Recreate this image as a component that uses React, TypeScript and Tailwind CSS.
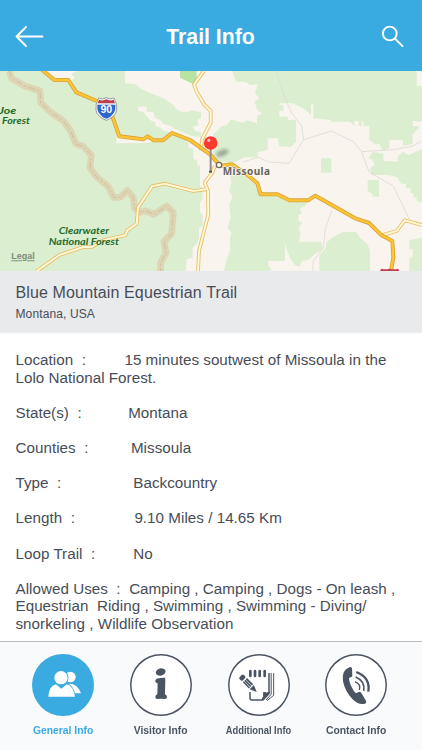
import type { ReactNode } from 'react'

const forest = [
  // west
  'M0 0H128L170 22L205 24L218 6L235 0H375V37L405 39L420 52L435 59L465 72L490 82L520 102L528 114L545 122H565L575 117L595 122L603 122V142L592 147L595 162L578 167L585 180L603 184V198L575 195L520 172L512 186L480 204L440 196L350 200V216H440L480 208L515 190L565 210L566 230L580 234V264L592 268V282L600 284V345L608 350V385L600 392V425L608 430V465L597 470V500L592 515L578 530V560L560 564L558 600H0Z',
  // north east
  'M696 0H1250V45H1266V152H1250V150H1238V165H1256V172L1238 190V218L1210 225L1208 207H1168V232L1145 240V228H1140V218L1125 220L1108 207V165H1091V150H1085V165H1076V150H1063V165L1050 152H993V147L940 142V100H933V132L910 112L895 105L878 97H838V102H850V120H838V137H863V148L888 146V212L873 227H838L833 202H803V237L773 244V259H733L700 275L673 272L655 278L640 262V190L663 167L680 162L693 145L728 155L743 148L771 157V135L788 127L773 119L763 92L778 82L765 67L773 39L753 42L733 32L708 32Z',
  // south of the interstate
  'M690 312L720 305L745 325L765 340L778 374H835L868 394L924 392L915 405L900 412L905 428L896 432V450L908 455L896 470L902 490L897 512H963L969 535L945 548L925 567L905 570L898 587L885 582L870 562L855 518V570H805V582L815 597L800 600H672L680 565L690 540V500L695 485L682 470L692 440L688 400L698 378L688 360L694 335Z',
  'M958 600V553L978 528V515L1000 498L1028 483H1068L1080 500L1102 518L1110 540V600Z',
  'M963 262H994V305H963Z',
  'M1103 327H1137V377H1118V370L1103 360Z',
  // east edge
  'M1105 264L1118 242L1150 248V270L1193 272V257L1208 242L1225 252L1266 235V394L1250 390V378L1240 380V366L1232 366V352L1218 352V338L1205 338L1190 318L1165 312H1115L1110 290L1124 282L1115 264Z',
  'M1228 507L1266 500V600H1228V560L1238 558V535H1228Z',
]

const clearings = [
  'M415 107H440V122L460 124L466 142L480 146L490 158L520 168L512 184L490 180L478 168L466 166V154L450 148L440 135L430 122L415 120Z',
  'M350 196L375 206V217H350Z',
  'M190 22L216 10L224 20L210 32Z',
  'M510 342L545 344L560 356L535 352Z',
]

const ridge =
  'M28 0L35 22L75 45L120 60L122 95L150 122L190 150L212 180L228 220L248 225L274 252L270 290L290 318L325 347L342 380L362 378L382 358L400 380L404 412L420 424L438 420L462 430L500 405L520 425L515 488L492 512L498 545L482 575V600'

const interstate =
  'M126 -4L163 27H205L229 64L290 90L328 110L358 196L429 205L443 196L461 208H488L516 186L570 207L630 250L660 284L696 280L742 312L772 337L782 370H832L868 388H924L946 374L1068 443L1107 456L1145 493L1177 510L1180 560L1174 594'

const highways = [
  'M612 0L582 40L590 62L612 100L632 120V155L606 205L603 238',
  'M108 602L178 552L250 528L276 528L312 507L376 493L382 478L410 458L414 410L456 346L495 338L580 360L618 355',
  'M594 602L597 540L625 430L624 360L614 335L635 308L645 285',
  'M1145 493L1190 480L1214 448L1266 462',
]

const lanes = [
  'M828 0L842 40L856 85L876 127L905 165L911 206L994 180L1060 212L1085 242L1107 303L1180 345L1228 445',
  'M1085 242L1180 236L1236 226L1266 210',
  'M728 273L775 259L808 273L867 277L911 206',
  'M996 417L976 472L970 530L940 570L938 600',
]

function TrailMap() {
  return (
    <svg viewBox="0 0 1266 600" className="block h-[200px] w-full shrink-0 bg-[#f9f4ed]" aria-label="Map of Missoula">
      <g fill="#dbeed0">
        {forest.map((d) => <path key={d} d={d} />)}
      </g>
      <path d="M540 0H590V28L578 38L540 20Z" fill="#b9e2a3" />
      <g fill="#f9f4ed">
        {clearings.map((d) => <path key={d} d={d} />)}
      </g>
      <g fill="none" strokeLinejoin="round">
        <path d={ridge} stroke="#dccfae" strokeOpacity="0.8" strokeWidth="20" />
        <path d={ridge} stroke="#cfae9c" strokeWidth="2" strokeDasharray="20 7 6 7" />
        {lanes.map((d) => <path key={d} d={d} stroke="#dedad5" strokeWidth="2.5" />)}
        {highways.map((d) => <path key={d} d={d} stroke="#e8ba62" strokeWidth="11" />)}
        {highways.map((d) => <path key={d} d={d} stroke="#fff8d6" strokeWidth="6" />)}
        <path d={interstate} stroke="#d9a23a" strokeWidth="12" />
        <path d={interstate} stroke="#fdc533" strokeWidth="7" />
      </g>

      {/* I-90 shield */}
      <path d="M296 81Q308 87 319 80Q330 87 342 81Q353 100 350 118Q346 138 319 148Q292 138 288 118Q285 100 296 81Z" fill="#f8f8fb" stroke="#8a8d96" strokeWidth="2.5" />
      <path d="M297 86Q308 91 319 85Q330 91 341 86L345 97H293Z" fill="#b8414d" />
      <path d="M292 101H346Q349 132 319 143Q289 132 292 101Z" fill="#2c66cf" />
      <text x="319" y="127" textAnchor="middle" className="fill-white font-['Liberation_Sans'] text-[32px] font-bold">90</text>

      {/* exit shield cut off by the lower edge */}
      <path d="M1144 593Q1156 597 1169 593Q1182 597 1194 593L1198 600H1140Z" fill="#c23c50" />

      <g className="fill-[#1f6b2b] font-[Lato] text-[27px] font-bold italic">
        <text x="-3" y="128" textLength="52" lengthAdjust="spacingAndGlyphs">Joe</text>
        <text x="6" y="160" textLength="84" lengthAdjust="spacingAndGlyphs">Forest</text>
        <text x="176" y="490" textLength="151" lengthAdjust="spacingAndGlyphs">Clearwater</text>
        <text x="146" y="522" textLength="211" lengthAdjust="spacingAndGlyphs">National Forest</text>
      </g>

      <ellipse cx="667" cy="246" rx="20" ry="10" fill="#6b6b60" opacity="0.5" transform="rotate(-22 667 246)" className="blur-[5px]" />
      <path d="M632 230V302" stroke="#8f8f8f" strokeWidth="6" />
      <rect x="627" y="299" width="9" height="6" fill="#5c5548" />
      <circle cx="632" cy="216" r="20.5" fill="#fb3a30" />
      <circle cx="626" cy="208" r="5" fill="#ffc0b8" />
      <circle cx="657" cy="282" r="8" fill="#fff" stroke="#6d6960" strokeWidth="4" />
      <text x="668" y="311" textLength="142" className="fill-[#66645f] stroke-[#f9f4ed] stroke-[4px] font-['Noto_Sans'] text-[30px] font-bold [paint-order:stroke]">Missoula</text>
      <text x="34" y="565" textLength="70" lengthAdjust="spacingAndGlyphs" className="fill-[#7f8b79] font-['Liberation_Sans'] text-[27px] font-bold underline">Legal</text>
    </svg>
  )
}

function Row({ label, gap, children }: { label: string; gap: string; children: ReactNode }) {
  return (
    <p className="mb-[17.6px] whitespace-pre">
      {label}
      <span className={`inline-block ${gap}`} />
      {children}
    </p>
  )
}

function PeopleIcon() {
  return (
    <svg viewBox="0 0 186 186" className="size-full">
      <circle cx="115" cy="69" r="16" fill="#fff" />
      <path d="M112 89Q137 89 147 118H112Z" fill="#fff" />
      <g fill="#fff" stroke="#3aabe1" strokeWidth="5" className="[paint-order:stroke]">
        <circle cx="87" cy="71" r="20" />
        <path d="M49 128Q52 94 72 91L88 104L104 91Q124 95 129 128Z" />
      </g>
    </svg>
  )
}

function InfoIcon() {
  return (
    <svg viewBox="0 0 186 186" className="size-full" fill="#4b5562">
      <ellipse cx="92" cy="54" rx="15" ry="10.5" transform="rotate(-15 92 54)" />
      <path d="M76 79Q78 73 86 73L100 71Q106 70 106 76L105 121Q112 124 111 130Q110 136 103 135Q93 133 84 135Q76 136 76 130Q75 124 82 121L83 88Q75 87 76 79Z" />
    </svg>
  )
}

function NotesIcon() {
  return (
    <svg viewBox="0 0 186 186" className="size-full" fill="none" stroke="#4b5562">
      <path d="M67 51V66M81 51V66M95 51V66M110 51V66" strokeWidth="8" strokeLinecap="round" />
      <path d="M66 114V132Q66 138 72 138H105L123 119V57" strokeWidth="4.5" />
      <path d="M129.5 57V121L114 138M137 57V124L117 140" strokeWidth="3" />
      <path d="M102 137Q109 128 107 115Q115 119 125 115Z" fill="#4b5562" strokeWidth="3" />
      <g fill="#4b5562" stroke="none" transform="translate(38 66) rotate(45)">
        <rect x="0" y="-9" width="14" height="18" rx="5" />
        <path d="M18 -9H44V-3.5H18ZM18 -2H44V3H18ZM18 4.5H44V9H18ZM47 -9L68 0L47 9Z" />
      </g>
    </svg>
  )
}

function PhoneIcon() {
  return (
    <svg viewBox="0 0 186 186" className="size-full" fill="none" stroke="#4b5562">
      <path d="M75 39Q81 38 81 44L82 65Q82 69 77 70L72 72Q72 87 87 112Q92 119 96 116L101 114Q106 112 109 117L123 140Q126 146 120 149Q100 154 82 135Q60 112 54 82Q49 47 75 39Z" fill="#4b5562" stroke="none" />
      <path d="M94 54Q137 71 130 113" strokeWidth="7" />
      <path d="M92 69Q122 82 116 111" strokeWidth="5" />
      <path d="M90 83Q109 91 103 108" strokeWidth="4" />
    </svg>
  )
}

const tabs = [
  { label: 'General Info', icon: <PeopleIcon />, active: true, fit: 'scale-x-[0.94]' },
  { label: 'Visitor Info', icon: <InfoIcon />, active: false, fit: 'scale-x-[0.94]' },
  { label: 'Additional Info', icon: <NotesIcon />, active: false, fit: 'scale-x-[0.85]' },
  { label: 'Contact Info', icon: <PhoneIcon />, active: false, fit: 'scale-x-[0.94]' },
]

export default function App() {
  return (
    <div className="flex h-[750px] w-[422px] flex-col overflow-hidden bg-white font-['Liberation_Sans',Arial,sans-serif] text-[#474d57]">
      <header className="flex h-[71px] shrink-0 items-center justify-between bg-[#3aabe1] pr-[17px] pl-[15px] text-white">
        <button aria-label="Back">
          <svg viewBox="0 0 30 24" className="block h-6 w-[30px]" fill="none" stroke="currentColor" strokeWidth="1.9" strokeLinecap="round" strokeLinejoin="round">
            <path d="M27.5 12.5H1.5M11 3L1.5 12.5L11 22" />
          </svg>
        </button>
        <h1 className="pt-[2px] pr-[5px] text-[21.2px] leading-6 font-bold">Trail Info</h1>
        <button aria-label="Search">
          <svg viewBox="0 0 24 24" className="block size-6" fill="none" stroke="currentColor" strokeWidth="1.9" strokeLinecap="round">
            <circle cx="8.8" cy="9.5" r="6.9" />
            <path d="M13.8 14.5L21.5 22.2" />
          </svg>
        </button>
      </header>

      <TrailMap />

      <section className="h-[62px] shrink-0 bg-[#e9eaec] pt-[12px] pl-[15.5px]">
        <h2 className="text-[16px] leading-5 tracking-[0.13px]">Blue Mountain Equestrian Trail</h2>
        <p className="mt-[3px] text-[12px] leading-4 tracking-[0.12px]">Montana, USA</p>
      </section>

      <main className="h-[308px] shrink-0 pt-[18.1px] pl-[15.5px] text-[15.2px] leading-[17.6px] tracking-[0.03px]">
        <Row label="Location  :" gap="w-[38.5px]">15 minutes soutwest of Missoula in the{'\n'}Lolo National Forest.</Row>
        <Row label="State(s)  :" gap="w-[46.5px]">Montana</Row>
        <Row label="Counties  :" gap="w-[42.5px]">Missoula</Row>
        <Row label="Type  :" gap="w-[72px]">Backcountry</Row>
        <Row label="Length  :" gap="w-[59.5px]">9.10 Miles / 14.65 Km</Row>
        <Row label="Loop Trail  :" gap="w-[38px]">No</Row>
        <Row label="Allowed Uses  :" gap="w-[8.5px]">Camping , Camping , Dogs - On leash ,{'\n'}Equestrian  Riding , Swimming , Swimming - Diving/{'\n'}snorkeling , Wildlife Observation</Row>
      </main>

      <nav className="flex h-[110px] shrink-0 border-t border-[#b9bbbd] bg-[#f8fafc] pt-[12px] pl-[14.5px]">
        {tabs.map((tab) => (
          <button key={tab.label} className="flex w-[97.7px] flex-col items-center">
            <span className={`size-[62px] rounded-full ${tab.active ? 'bg-[#3aabe1]' : 'bg-white ring-[1.5px] ring-[#4b5562] ring-inset'}`}>
              {tab.icon}
            </span>
            <span className={`mt-[6px] text-[11px] leading-4 font-bold whitespace-nowrap ${tab.fit} ${tab.active ? 'text-[#3aabe1]' : 'text-[#4b5562]'}`}>
              {tab.label}
            </span>
          </button>
        ))}
      </nav>
    </div>
  )
}
